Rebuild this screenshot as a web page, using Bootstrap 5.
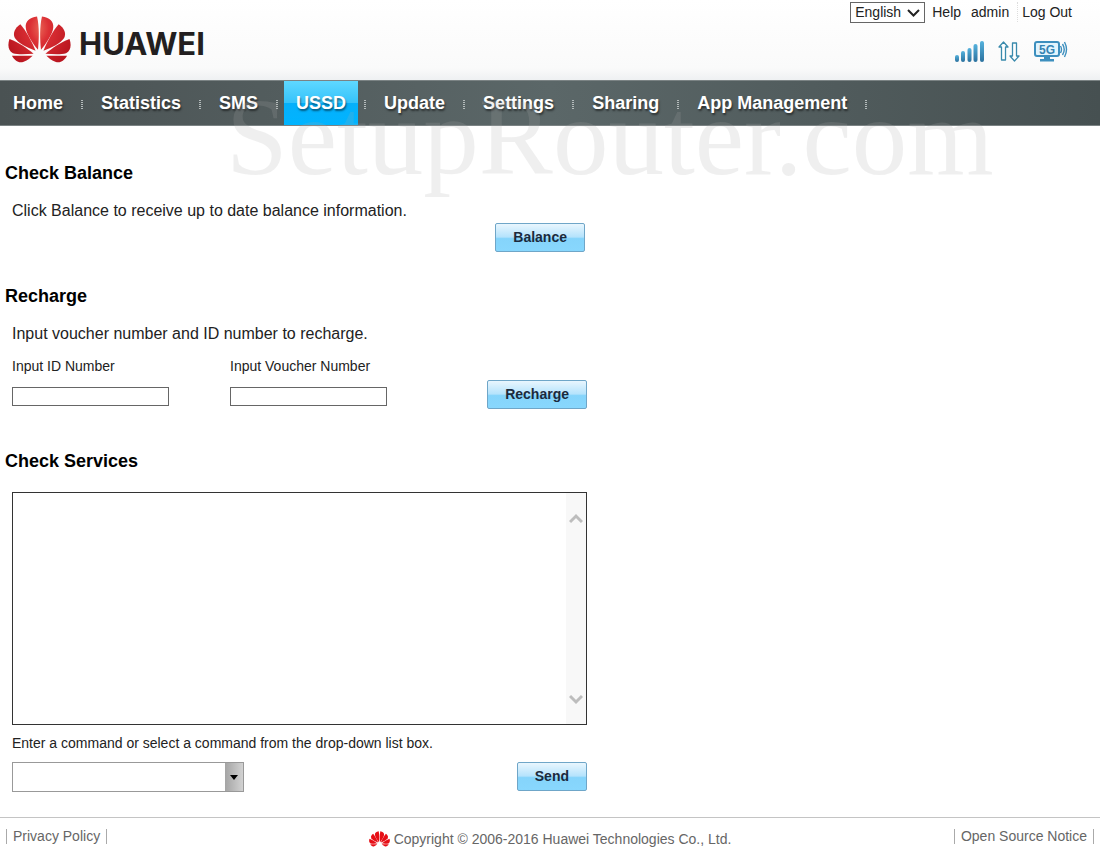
<!DOCTYPE html>
<html lang="en">
<head>
<meta charset="utf-8">
<meta name="viewport" content="width=device-width, initial-scale=1">
<title>USSD</title>
<link href="https://cdn.jsdelivr.net/npm/bootstrap@5.3.0/dist/css/bootstrap.min.css" rel="stylesheet">
<style>
  body { font-family: "Liberation Sans", Arial, sans-serif; font-size: 14px; line-height: 20px; color: #222; background: #fff; }
  a { color: inherit; text-decoration: none; }
  .topbar { min-height: 80px; background: linear-gradient(#fff 0, #fafafa 68px, #eef0f2 80px); }
  .wordmark { font: 700 31px/32px Inter, "Liberation Sans", sans-serif; color: #231f20; }
  .tools { padding: 2px 28px 0 0; }
  .links { gap: 10px; }
  .lang-wrap { margin-right: -3px; }
  .lang { width: 75px; height: 21px; border: 1px solid #666; background: #fff; font-size: 14px; line-height: 19px; color: #222; appearance: none; padding: 0 4px; }
  .lang-wrap svg { position: absolute; right: 5px; top: 7px; pointer-events: none; }
  .logout { border-left: 1px dotted #ddd; padding-left: 4px; margin-left: -2px; }
  .status { gap: 14px; padding: 18px 4px 0 0; }
  .mainnav { min-height: 46px; border-top: 1px solid #7b8384; border-bottom: 1px solid #7b8384;
    background: linear-gradient(90deg, #4a5253, #5b6768 50%, #465051); padding-left: 1px; }
  .mainnav a { color: #fff; font-size: 18px; font-weight: 700; line-height: 44px; padding: 0 12px; display: block; text-shadow: 1px 2px 2px rgba(0,0,0,.5); }
  .mainnav .current { background: linear-gradient(#5fd8ff, #35c3fb 49%, #06b0fb 51%, #00b4ff); }
  .mainnav li { display: flex; align-items: center; }
  .mainnav li::after { content: ""; width: 2px; height: 9px; margin: 2px 6px 0;
    background: repeating-linear-gradient(#b4bbbb 0 1px, transparent 1px 2px); }
  .watermark { position: absolute; left: 226px; top: 82px; font: 111px/110px "Liberation Serif", serif; color: rgba(170,170,170,.19); pointer-events: none; white-space: nowrap; }
  main { padding-top: 35px; }
  h2 { font-size: 18px; line-height: 24px; font-weight: 700; color: #000; margin: 0 0 14px; padding-left: 5px; }
  .recharge { margin-top: 32px; }
  .services { margin-top: 40px; }
  .services h2 { margin-bottom: 19px; }
  .panel { max-width: 587px; padding-left: 12px; }
  .balance-action { padding-right: 2px; }
  .intro { font-size: 16px; line-height: 24px; margin: 0; }
  .sky { height: 29px; border: 1px solid #6fa6c8; border-radius: 2px; font-size: 14px; font-weight: 700; line-height: 18px; color: #1b2a3d; padding: 0 17px 2px;
    background: linear-gradient(#e9f6fe, #b5e3fc 48%, #85d4fb 54%, #88d7fd); }
  .field { width: 218px; padding: 10px 0 3px; }
  .field label { margin-bottom: 11px; }
  .entry { display: block; width: 157px; height: 19px; border: 1px solid #666; padding: 0 4px; background: #fff; }
  .reply { border: 1px solid #333; height: 233px; margin-bottom: 8px; }
  .reply textarea { border: 0; resize: none; outline: 0; overflow: hidden; }
  .track { width: 20px; background: #f8f8f8; padding: 20px 0 19px; }
  .command-row { margin-top: 9px; }
  .combo { width: 232px; height: 30px; border: 1px solid #999; }
  .combo input { border: 0; outline: 0; min-width: 0; }
  .combo button { width: 18px; border: 0; padding: 0; background: linear-gradient(90deg, #a4a4a4, #d2d2d2); }
  footer { border-top: 1px solid #c4c4c4; min-height: 33px; padding: 5px 6px 0; color: #666; }
  .piped { display: inline-block; border: solid #aaa; border-width: 0 1px; padding: 0 6px; line-height: 15px; }
  .copyright { padding-top: 6px; }
</style>
</head>
<body class="d-flex flex-column min-vh-100 position-relative">

<svg width="0" height="0" class="position-absolute" aria-hidden="true">
  <defs>
    <radialGradient id="petalRed" gradientUnits="userSpaceOnUse" cx="40" cy="12" r="44">
      <stop offset="0" stop-color="#f08468"/><stop offset=".4" stop-color="#dc3035"/><stop offset="1" stop-color="#b9151f"/>
    </radialGradient>
    <symbol id="flower" viewBox="0 0 64 48">
      <g id="halfFlower">
        <path d="M30.500 34C31.500 23 32 11 29.500 0C22 1 17.500 5 18 11C18.500 18 25 27 30.500 34Z"/>
        <path d="M28 35C24 25 18 14 12.500 8C7 12 4.500 17 7 22C10 27 20 32 28 35Z"/>
        <path d="M26 38C19 32 10 26 1.500 23C-.5 29 0 35 5 37.500C10 39 18 38.500 26 38Z"/>
        <path d="M25 40C18 40 11 40 4 40C7 45 11 48 16 46C20 44.500 23 42 25 40Z"/>
      </g>
      <use href="#halfFlower" transform="translate(64 0) scale(-1 1)"/>
    </symbol>
    <linearGradient id="steel" x1="0" y1="0" x2="0" y2="1">
      <stop offset="0" stop-color="#55b2dd"/><stop offset="1" stop-color="#2b719e"/>
    </linearGradient>
  </defs>
</svg>

<header class="topbar d-flex justify-content-between">
  <a href="#" class="d-flex align-items-center ps-2 gap-2" aria-label="Huawei home">
    <svg width="63" height="48" fill="url(#petalRed)"><use href="#flower"/></svg>
    <span class="wordmark mt-2">HUAWEI</span>
  </a>
  <div class="tools">
    <div class="links d-flex align-items-start justify-content-end">
      <div class="lang-wrap position-relative">
        <select class="lang d-block" aria-label="Language"><option>English</option></select>
        <svg width="13" height="8" viewBox="0 0 13 8" fill="none" stroke="#222" stroke-width="2"><path d="M1 1l5.500 5.500L12 1"/></svg>
      </div>
      <a href="#">Help</a>
      <a href="#">admin</a>
      <a href="#" class="logout">Log Out</a>
    </div>
    <div class="status d-flex justify-content-end align-items-center">
      <svg width="29" height="21" viewBox="0 0 29 21" fill="url(#steel)" aria-label="Signal">
        <rect x="0" y="14" width="4" height="7" rx="2"/><rect x="6" y="10" width="4" height="11" rx="2"/><rect x="12.500" y="7" width="4" height="14" rx="2"/><rect x="18.500" y="3" width="4" height="18" rx="2"/><rect x="25" y="0" width="4" height="21" rx="2"/>
      </svg>
      <svg width="22" height="21" viewBox="0 0 22 21" fill="#fff" stroke="#3a8aac" stroke-width="1.300" stroke-linejoin="round" aria-label="Data traffic">
        <path d="M5.500 1L10 6H7.500V19H3.500V6H1Z"/><path d="M16.500 20L21 15H18.500V2H14.500V15H12Z"/>
      </svg>
      <svg width="34" height="21" viewBox="0 0 34 21" fill="none" stroke="#3d8fbe" aria-label="5G Wi-Fi">
        <rect x="1" y="1" width="24" height="14" rx="2" fill="#e2f4fd" stroke-width="2"/>
        <path d="M10 16h6v2h4v2.500H6V18h4z" fill="#3d8fbe" stroke="none"/>
        <text x="13" y="12.500" text-anchor="middle" font-size="12" font-weight="700" fill="#3584b4" stroke="none">5G</text>
        <path d="M26.500 5q2 3.500 0 7M28.500 3q3.500 5.500 0 11M30.500 1q4 7.500 0 15" stroke-width="1.400"/>
      </svg>
    </div>
  </div>
</header>

<nav class="mainnav">
  <ul class="list-unstyled d-flex flex-wrap m-0">
    <li><a href="#">Home</a></li>
    <li><a href="#">Statistics</a></li>
    <li><a href="#">SMS</a></li>
    <li><a href="#" class="current" aria-current="page">USSD</a></li>
    <li><a href="#">Update</a></li>
    <li><a href="#">Settings</a></li>
    <li><a href="#">Sharing</a></li>
    <li><a href="#">App Management</a></li>
  </ul>
</nav>
<div class="watermark" aria-hidden="true">SetupRouter.com</div>

<main class="flex-grow-1">
  <section>
    <h2>Check Balance</h2>
    <div class="panel">
      <p class="intro">Click Balance to receive up to date balance information.</p>
      <div class="balance-action d-flex justify-content-end"><button type="button" class="sky">Balance</button></div>
    </div>
  </section>
  <section class="recharge">
    <h2>Recharge</h2>
    <form class="panel">
      <p class="intro">Input voucher number and ID number to recharge.</p>
      <div class="d-flex">
        <div class="field"><label for="idNo" class="d-block">Input ID Number</label><input id="idNo" class="entry" type="text"></div>
        <div class="field"><label for="voucher" class="d-block">Input Voucher Number</label><input id="voucher" class="entry" type="text"></div>
        <button type="button" class="sky ms-auto align-self-end">Recharge</button>
      </div>
    </form>
  </section>
  <section class="services">
    <h2>Check Services</h2>
    <form class="panel">
      <div class="reply d-flex">
        <textarea class="flex-grow-1" aria-label="Service reply" readonly></textarea>
        <div class="track d-flex flex-column justify-content-between align-items-center" aria-hidden="true">
          <svg width="14" height="11" viewBox="0 0 14 11" fill="none" stroke="#bdbdbd" stroke-width="3"><path d="M1 9l6-6 6 6"/></svg>
          <svg width="14" height="11" viewBox="0 0 14 11" fill="none" stroke="#bdbdbd" stroke-width="3"><path d="M1 2l6 6 6-6"/></svg>
        </div>
      </div>
      <label for="command" class="d-block">Enter a command or select a command from the drop-down list box.</label>
      <div class="command-row d-flex justify-content-between align-items-start">
        <div class="combo d-flex">
          <input id="command" type="text" class="flex-grow-1 px-1">
          <button type="button" aria-label="Show commands"><svg width="8" height="5" viewBox="0 0 8 5" class="d-block mx-auto"><path d="M0 0h8L4 5z"/></svg></button>
        </div>
        <button type="button" class="sky">Send</button>
      </div>
    </form>
  </section>
</main>

<footer>
  <div class="row g-0 align-items-center">
    <div class="col"><a href="#" class="piped">Privacy Policy</a></div>
    <div class="copyright col-auto d-flex align-items-center gap-1"><svg width="21" height="16" fill="#e60f16"><use href="#flower"/></svg><span>Copyright © 2006-2016 Huawei Technologies Co., Ltd.</span></div>
    <div class="col text-end"><a href="#" class="piped text-start">Open Source Notice</a></div>
  </div>
</footer>
<script src="https://cdn.jsdelivr.net/npm/bootstrap@5.3.0/dist/js/bootstrap.bundle.min.js"></script>
</body>
</html>
